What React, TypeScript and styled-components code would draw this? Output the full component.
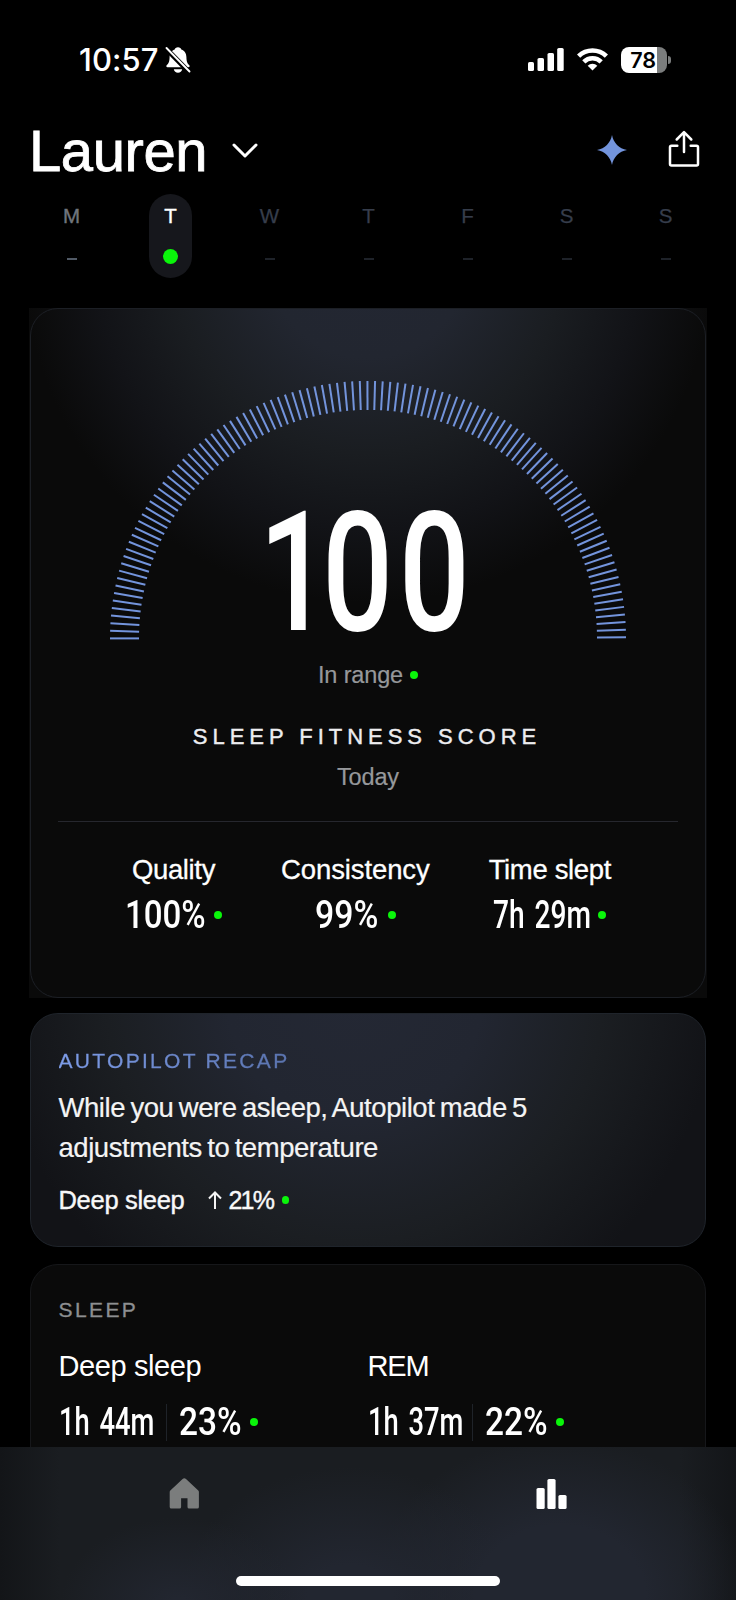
import React from "react";
import styled, { createGlobalStyle, css } from "styled-components";

const GREEN = "#0af50a";
const BLUE = "#7394dc";

const GlobalStyle = createGlobalStyle`
  *, *::before, *::after { box-sizing: border-box; }
  body { margin: 0; background: #000; }
`;

const Screen = styled.div`
  width: 736px;
  height: 1600px;
  display: flex;
  flex-direction: column;
  overflow: hidden;
  background: #000;
  color: #fff;
  font-family: "Liberation Sans", Arial, sans-serif;
`;

const Content = styled.main`
  flex: 1;
  min-height: 0;
  overflow: hidden;
`;

/* ---------- status bar ---------- */

const StatusBar = styled.div`
  height: 119px;
  padding: 0 65px 0 79px;
  display: flex;
  align-items: center;
  justify-content: space-between;
`;

const StatusGroup = styled.div<{ $gap: number }>`
  display: flex;
  align-items: center;
  gap: ${(p) => p.$gap}px;
`;

const Clock = styled.span`
  font: 540 31px/38px Inter, sans-serif;
  letter-spacing: 0.1px;
`;

const Battery = styled.div`
  display: flex;
  align-items: center;
  gap: 1px;
  &::after {
    content: "";
    width: 3px;
    height: 8px;
    border-radius: 0 3px 3px 0;
    background: #7b7d7d;
  }
`;

const BatteryBody = styled.div`
  width: 46px;
  height: 26px;
  border-radius: 8px;
  background: linear-gradient(90deg, #fff 36px, #7b7d7d 36px);
  color: #000;
  font: 620 21.5px/26px Inter, sans-serif;
  letter-spacing: -0.2px;
  text-align: center;
  padding-right: 2px;
`;

/* ---------- header ---------- */

const Header = styled.header`
  height: 65px;
  padding: 0 36px 2px 29px;
  display: flex;
  align-items: center;
`;

const Name = styled.h1`
  margin: 0;
  font-size: 58px;
  line-height: 63px;
  font-weight: 400;
  letter-spacing: -0.4px;
  -webkit-text-stroke: 0.8px #fff;
`;

const Chevron = styled.svg`
  margin-left: 24px;
`;

const HeaderActions = styled.div`
  margin-left: auto;
  display: flex;
  align-items: center;
  gap: 41.5px;
`;

const Action = styled.div<{ $lift: number }>`
  display: flex;
  margin-bottom: ${(p) => p.$lift}px;
`;

/* ---------- week strip ---------- */

const Week = styled.div`
  margin: 10px 21.5px 30px 22px;
  display: grid;
  grid-template-columns: repeat(7, 99px);
  justify-items: center;
`;

type DayState = "past" | "active" | "future";
const dayColor = { past: "#70757d", active: "#fff", future: "#363d4b" };
const dashColor = { past: "#515a66", active: GREEN, future: "#1e2229" };

const Day = styled.div<{ $state: DayState }>`
  width: 43px;
  height: 84px;
  padding-top: 12px;
  border-radius: 22px;
  display: flex;
  flex-direction: column;
  align-items: center;
  font-size: 20.5px;
  line-height: 20px;
  color: ${(p) => dayColor[p.$state]};
  background: ${(p) => (p.$state === "active" ? "#16171c" : "transparent")};
  -webkit-text-stroke: ${(p) => (p.$state === "future" ? 0.25 : 0.4)}px;
`;

const DayMark = styled.span<{ $state: DayState }>`
  background: ${(p) => dashColor[p.$state]};
  ${(p) =>
    p.$state === "active"
      ? css`
          width: 15px;
          height: 15px;
          margin-top: 23px;
          border-radius: 50%;
        `
      : css`
          width: 10px;
          height: 2px;
          margin-top: 32px;
        `}
`;

/* ---------- shared ---------- */

const Dot = styled.i<{ $size?: number; $gap: number; $drop?: number }>`
  flex: none;
  width: ${(p) => p.$size ?? 8}px;
  height: ${(p) => p.$size ?? 8}px;
  margin-left: ${(p) => p.$gap}px;
  margin-top: ${(p) => p.$drop ?? 0}px;
  border-radius: 50%;
  background: ${GREEN};
`;

const NumeralBox = styled.span<{ $width: number }>`
  display: block;
  flex: none;
  width: ${(p) => p.$width}px;
  white-space: pre;
`;

const NumeralText = styled.span<{ $stretch: number }>`
  display: inline-block;
  transform: scaleX(${(p) => p.$stretch});
  transform-origin: 0 50%;
  font-family: Roboto, sans-serif;
  font-weight: 500;
  font-size: 38px;
  line-height: 40px;
  word-spacing: 4px;
`;

type NumeralProps = { text: string; width: number; stretch: number };

const Numeral = ({ text, width, stretch }: NumeralProps) => (
  <NumeralBox $width={width}>
    <NumeralText $stretch={stretch}>{text}</NumeralText>
  </NumeralBox>
);

const Row = styled.div`
  display: flex;
  align-items: center;
`;

const Overline = styled.h2<{ $tint?: boolean }>`
  margin: 0;
  width: max-content;
  font-size: 21px;
  line-height: 26px;
  font-weight: 400;
  letter-spacing: ${(p) => (p.$tint ? 2.3 : 2.4)}px;
  color: #8d8f91;
  -webkit-text-stroke: 0.3px;
  ${(p) =>
    p.$tint &&
    css`
      color: transparent;
      -webkit-text-stroke: 0.3px transparent;
      background: linear-gradient(90deg, #7d9ce8, #5a73ae);
      background-clip: text;
    `}
`;

/* ---------- score card ---------- */

const ScoreCard = styled.section`
  position: relative;
  width: 678px;
  height: 690px;
  margin: 0 0 0 29px;
  padding: 73px 29px 0;
  display: flex;
  flex-direction: column;
  align-items: center;
  background: radial-gradient(
    circle at 50% -50px,
    #232733 0,
    #222630 100px,
    #1a1d21 195px,
    #121317 272px,
    #0a0a0a 345px
  );
  &::after {
    content: "";
    position: absolute;
    inset: 0 1px;
    border: 1px solid #1c1f25;
    border-radius: 28px;
  }
`;

const GaugeArea = styled.div`
  width: 518px;
  height: 260px;
  display: grid;
  & > * {
    grid-area: 1 / 1;
  }
`;

const ScoreValue = styled.div`
  place-self: end start;
  margin: 0 0 -2px 150px;
  width: 205px;
  height: 140px;
`;

const ScoreText = styled.div`
  width: max-content;
  font: 500 167px/140px Roboto, sans-serif;
  letter-spacing: 8px;
  transform: scaleX(0.745);
  transform-origin: 0 50%;
`;

const LeadDigit = styled.span`
  letter-spacing: -10px;
`;

const Muted = styled.div<{ $top: number }>`
  margin-top: ${(p) => p.$top}px;
  display: flex;
  align-items: center;
  font-size: 23.5px;
  line-height: 30px;
  letter-spacing: -0.15px;
  color: #96989b;
  -webkit-text-stroke: 0.2px;
`;

const ScoreTitle = styled.h2`
  margin: 32px 2px 0 0;
  font-size: 22px;
  line-height: 30px;
  font-weight: 400;
  letter-spacing: 4.97px;
  color: #ededf0;
  -webkit-text-stroke: 0.4px;
`;

const Rule = styled.hr`
  width: 620px;
  height: 1px;
  margin: 29px 0 31px;
  border: 0;
  background: #26272e;
`;

const Stats = styled.div`
  display: flex;
  gap: 59px;
`;

const Stat = styled.div`
  display: flex;
  flex-direction: column;
  align-items: center;
  gap: 8px;
`;

const StatLabel = styled.div<{ $track: number }>`
  font-size: 27.5px;
  line-height: 34px;
  letter-spacing: ${(p) => p.$track}px;
  -webkit-text-stroke: 0.3px;
`;

/* ---------- recap + sleep cards ---------- */

const Card = styled.section<{ $glow?: boolean }>`
  width: 676px;
  height: 234px;
  margin: ${(p) => (p.$glow ? 15 : 17)}px 0 0 30px;
  padding: ${(p) => (p.$glow ? 34 : 32)}px 27.5px 0;
  border: 1px solid ${(p) => (p.$glow ? "#1f242b" : "#16171a")};
  border-radius: 28px;
  background: ${(p) =>
    p.$glow
      ? "radial-gradient(circle 400px at 48% -20px, #242834 0, #222631 32%, #1b1e22 62%, #121317 90%)"
      : "#0a0a0a"};
`;

const Recap = styled.p`
  margin: 14px 0 17px;
  font-size: 27.5px;
  line-height: 40px;
  letter-spacing: -0.45px;
  word-spacing: -1.8px;
  color: #f4f4f4;
  -webkit-text-stroke: 0.2px;
`;

const RecapMetric = styled(Row)`
  font-size: 25.5px;
  line-height: 30px;
  color: #f8f8f8;
  -webkit-text-stroke: 0.4px;
`;

const MetricName = styled.span`
  width: 149px;
  letter-spacing: -0.3px;
`;

const MetricChange = styled.span`
  margin-left: 7px;
  font-size: 25px;
  letter-spacing: -1.8px;
`;

const Columns = styled.div`
  margin-top: 25px;
  display: grid;
  grid-template-columns: 309px 1fr;
`;

const StageName = styled.div<{ $track: number }>`
  margin-bottom: 18px;
  font-size: 29px;
  line-height: 36px;
  letter-spacing: ${(p) => p.$track}px;
`;

const Separator = styled.i`
  width: 1px;
  height: 37px;
  margin: 0 12px 0 13px;
  background: #1f2329;
`;

/* ---------- tab bar ---------- */

const TabBar = styled.nav`
  height: 153px;
  flex: none;
  padding: 31px 0 14px;
  display: grid;
  grid-template-columns: 1fr 1fr;
  justify-items: center;
  align-content: space-between;
  background: radial-gradient(ellipse 120px 90px at 180px 160px, #222630 10%, transparent),
    radial-gradient(ellipse 170px 130px at 350px 150px, #222630 25%, transparent),
    radial-gradient(ellipse 190px 160px at 560px 150px, #222630 45%, transparent),
    linear-gradient(90deg, #131518, #1a1d21 60px, #1a1d21 680px, #131518);
`;

const BarsSlot = styled.div`
  display: flex;
  margin-right: 1px;
`;

const HomeIndicator = styled.div`
  grid-column: 1 / -1;
  width: 264px;
  height: 10px;
  border-radius: 5px;
  background: #fff;
`;

/* ---------- drawings ---------- */

const BellOff = () => (
  <svg width="26" height="28" viewBox="0 0 26 28">
    <path
      d="M13 1.2c1.9 0 2.9 1 3.3 2.2 3.6 1.2 5 4 5.1 7.6.1 4.600.9 6.500 2.900 8.300.7.7.4 2-.8 2H2.500c-1.200 0-1.500-1.300-.8-2C3.700 17.500 4.500 15.600 4.600 11c.1-3.600 1.500-6.400 5.100-7.600C10.100 2.200 11.100 1.200 13 1.200Z"
      fill="#fff"
    />
    <path d="M8.800 23.300h8.400c-.4 2-2 3.400-4.200 3.400s-3.800-1.400-4.200-3.400Z" fill="#fff" />
    <path d="M0 1.500 24.500 26.500" stroke="#000" strokeWidth="5" />
    <path d="M1.500 2 24.500 25.500" stroke="#fff" strokeWidth="1.900" strokeLinecap="round" />
  </svg>
);

const Signal = () => (
  <svg width="36" height="23" viewBox="0 0 36 23" fill="#fff">
    <rect x="0" y="14" width="6" height="9" rx="1.600" />
    <rect x="9.500" y="10" width="6.500" height="13" rx="1.600" />
    <rect x="19.500" y="5" width="6.500" height="18" rx="1.600" />
    <rect x="29.200" y="0" width="6.500" height="23" rx="1.600" />
  </svg>
);

const Wifi = () => (
  <svg width="31" height="23" viewBox="0 0 31 23" fill="none" stroke="#fff" strokeWidth="4.500">
    <path d="M1.600 8.200a19.700 19.700 0 0 1 27.800 0" />
    <path d="M6.800 13.900a12.300 12.300 0 0 1 17.400 0" />
    <path d="M15.500 22.600 10.700 17.800a6.800 6.800 0 0 1 9.600 0Z" fill="#fff" stroke="none" />
  </svg>
);

const Star = () => (
  <svg width="30" height="30" viewBox="0 0 30 30">
    <path
      d="M15 0C16.500 8 22 13.500 30 15 22 16.500 16.500 22 15 30 13.500 22 8 16.500 0 15 8 13.500 13.500 8 15 0Z"
      fill={BLUE}
    />
  </svg>
);

const Share = () => (
  <svg width="32" height="38" viewBox="0 0 32 38" fill="none" stroke="#fff" strokeWidth="2.500" strokeLinecap="round" strokeLinejoin="round">
    <path d="M9.300 15.700H3.500a1.500 1.500 0 0 0-1.500 1.500V34a1.500 1.500 0 0 0 1.500 1.500h25A1.500 1.500 0 0 0 30 34V17.200a1.500 1.500 0 0 0-1.500-1.500h-5.800" />
    <path d="M16 22V2.500M8.700 9.500 16 2.200l7.300 7.300" />
  </svg>
);

const TICKS = 107;

const Gauge = () => (
  <svg width="518" height="260" viewBox="0 0 518 260" stroke={BLUE} strokeWidth="2">
    {Array.from({ length: TICKS }, (_, i) => {
      const a = (i * 179.75 * Math.PI) / 180 / (TICKS - 1);
      const c = Math.cos(a);
      const s = Math.sin(a);
      return <line key={i} x1={259 - 258 * c} y1={257.4 - 257.500 * s} x2={259 - 229 * c} y2={257.4 - 228.500 * s} />;
    })}
  </svg>
);

const UpArrow = () => (
  <svg width="14" height="18" viewBox="0 0 14 18" fill="none" stroke="#f4f4f4" strokeWidth="2">
    <path d="M7 18V1.500M1 7.500l6-6 6 6" />
  </svg>
);

const Home = () => (
  <svg width="31" height="31" viewBox="0 0 31 31">
    <path
      d="M13.600 1a2.500 2.500 0 0 1 3.400 0l12 11.200a2.500 2.500 0 0 1 .9 2V29a1.600 1.600 0 0 1-1.600 1.600h-8.200A1.600 1.600 0 0 1 18.500 29v-8.700h-6.400V29a1.600 1.600 0 0 1-1.600 1.600H2.300A1.600 1.600 0 0 1 .7 29V14.200a2.500 2.500 0 0 1 .9-2Z"
      fill="#7b7d7d"
    />
  </svg>
);

const Bars = () => (
  <svg width="31" height="31" viewBox="0 0 31 31" fill="#fff">
    <rect x="0.500" y="10" width="8.200" height="21" rx="1.600" />
    <rect x="11.400" y="1" width="8.200" height="30" rx="1.600" />
    <rect x="22.400" y="17" width="8.200" height="14" rx="1.600" />
  </svg>
);

/* ---------- data ---------- */

const week: { letter: string; state: DayState }[] = [
  { letter: "M", state: "past" },
  { letter: "T", state: "active" },
  { letter: "W", state: "future" },
  { letter: "T", state: "future" },
  { letter: "F", state: "future" },
  { letter: "S", state: "future" },
  { letter: "S", state: "future" },
];

const stats = [
  { label: "Quality", labelTrack: -0.35, text: "100%", width: 81, stretch: 0.87 },
  { label: "Consistency", labelTrack: -0.1, text: "99%", width: 65, stretch: 0.89 },
  { label: "Time slept", labelTrack: -0.35, text: "7h 29m", width: 97, stretch: 0.74 },
];

const stages = [
  { name: "Deep sleep", nameTrack: -0.4, time: "1h 44m", timeWidth: 94, share: "23%" },
  { name: "REM", nameTrack: -1.2, time: "1h 37m", timeWidth: 91, share: "22%" },
];

export default function App() {
  return (
    <>
      <GlobalStyle />
      <Screen>
        <Content>
          <StatusBar>
            <StatusGroup $gap={6}>
              <Clock>10:57</Clock>
              <BellOff />
            </StatusGroup>
            <StatusGroup $gap={13}>
              <Signal />
              <Wifi />
              <Battery>
                <BatteryBody>78</BatteryBody>
              </Battery>
            </StatusGroup>
          </StatusBar>

          <Header>
            <Name>Lauren</Name>
            <Chevron width="28" height="17" viewBox="0 0 28 17" fill="none" stroke="#fff" strokeWidth="3" strokeLinecap="round" strokeLinejoin="round">
              <path d="M3 3l11 11L25 3" />
            </Chevron>
            <HeaderActions>
              <Action $lift={2}>
                <Star />
              </Action>
              <Action $lift={4}>
                <Share />
              </Action>
            </HeaderActions>
          </Header>

          <Week>
            {week.map((d, i) => (
              <Day key={i} $state={d.state}>
                {d.letter}
                <DayMark $state={d.state} />
              </Day>
            ))}
          </Week>

          <ScoreCard>
            <GaugeArea>
              <Gauge />
              <ScoreValue>
                <ScoreText>
                  <LeadDigit>1</LeadDigit>00
                </ScoreText>
              </ScoreValue>
            </GaugeArea>
            <Muted $top={19}>
              In range
              <Dot $gap={7} />
            </Muted>
            <ScoreTitle>SLEEP FITNESS SCORE</ScoreTitle>
            <Muted $top={10}>Today</Muted>
            <Rule />
            <Stats>
              {stats.map((s) => (
                <Stat key={s.label}>
                  <StatLabel $track={s.labelTrack}>{s.label}</StatLabel>
                  <Row>
                    <Numeral text={s.text} width={s.width} stretch={s.stretch} />
                    <Dot $gap={8} />
                  </Row>
                </Stat>
              ))}
            </Stats>
          </ScoreCard>

          <Card $glow>
            <Overline $tint>AUTOPILOT RECAP</Overline>
            <Recap>
              While you were asleep, Autopilot made 5
              <br />
              adjustments to temperature
            </Recap>
            <RecapMetric>
              <MetricName>Deep sleep</MetricName>
              <UpArrow />
              <MetricChange>21%</MetricChange>
              <Dot $gap={8.5} $size={7.5} />
            </RecapMetric>
          </Card>

          <Card>
            <Overline>SLEEP</Overline>
            <Columns>
              {stages.map((s) => (
                <div key={s.name}>
                  <StageName $track={s.nameTrack}>{s.name}</StageName>
                  <Row>
                    <Numeral text={s.time} width={s.timeWidth} stretch={0.72} />
                    <Separator />
                    <Numeral text={s.share} width={64} stretch={0.88} />
                    <Dot $gap={7.5} />
                  </Row>
                </div>
              ))}
            </Columns>
          </Card>
        </Content>

        <TabBar>
          <Home />
          <BarsSlot>
            <Bars />
          </BarsSlot>
          <HomeIndicator />
        </TabBar>
      </Screen>
    </>
  );
}
